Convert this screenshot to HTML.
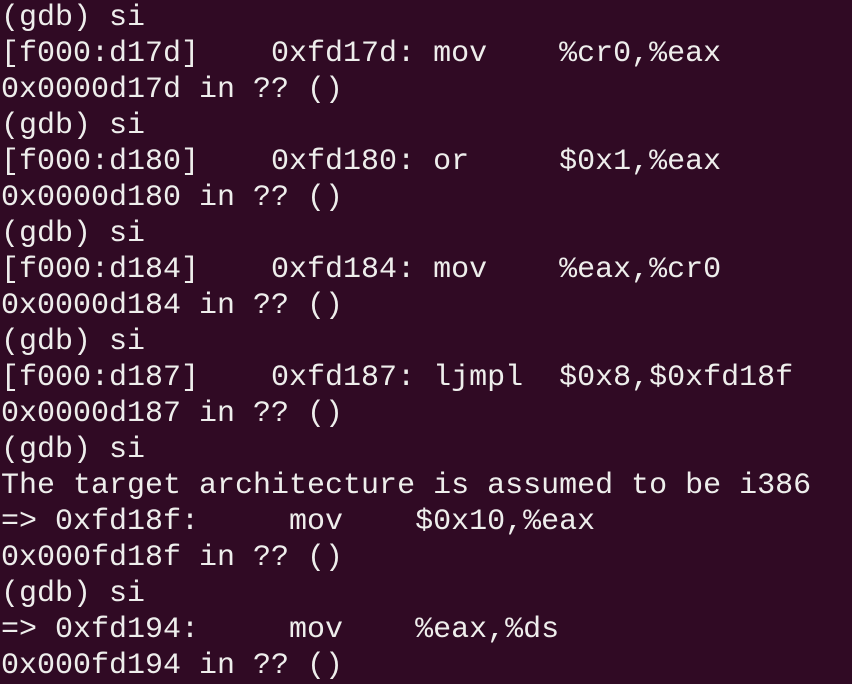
<!DOCTYPE html>
<html><head><style>
html,body{margin:0;padding:0;background:#300a24;width:852px;height:684px;overflow:hidden}
pre{margin:0;position:absolute;left:1px;top:0px;font-family:"Liberation Mono",monospace;font-size:30px;line-height:36px;letter-spacing:0px;color:#eeeeec;white-space:pre}
</style></head><body>
<pre>(gdb) si
[f000:d17d]    0xfd17d: mov    %cr0,%eax
0x0000d17d in ?? ()
(gdb) si
[f000:d180]    0xfd180: or     $0x1,%eax
0x0000d180 in ?? ()
(gdb) si
[f000:d184]    0xfd184: mov    %eax,%cr0
0x0000d184 in ?? ()
(gdb) si
[f000:d187]    0xfd187: ljmpl  $0x8,$0xfd18f
0x0000d187 in ?? ()
(gdb) si
The target architecture is assumed to be i386
=&gt; 0xfd18f:     mov    $0x10,%eax
0x000fd18f in ?? ()
(gdb) si
=&gt; 0xfd194:     mov    %eax,%ds
0x000fd194 in ?? ()</pre>
</body></html>
